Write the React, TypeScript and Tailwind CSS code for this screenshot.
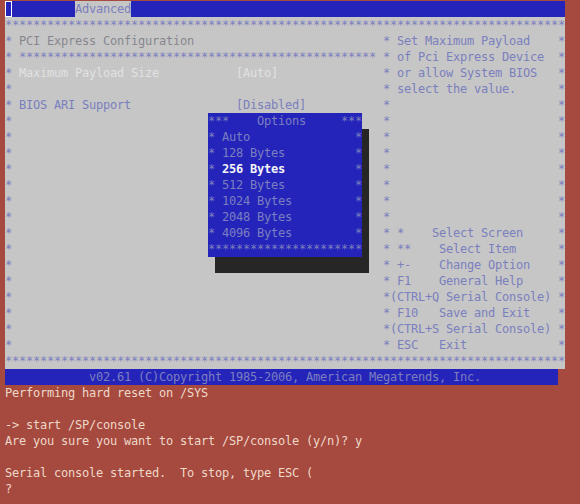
type Seg = [string, string]

const GRAY = "bg-[#c6c6c6] text-[#7b7fbe]"
const GTXT = "bg-[#c6c6c6] text-[#86868f]"
const GHI = "bg-[#c6c6c6] text-[#e2e2e2]"
const BLUE = "bg-[#2424bb] text-[#7b7fbe]"
const BSEL = "bg-[#2424bb] text-[#f4f4f4] font-bold"
const SHAD = "bg-[#262626]"
const CON = "text-[#eed8c8]"

const sp = (n: number) => " ".repeat(n)

const rightText = [
  " Set Maximum Payload",
  " of Pci Express Device",
  " or allow System BIOS",
  " select the value.",
  "", "", "", "", "", "", "", "",
  " *    Select Screen",
  " **    Select Item",
  " +-    Change Option",
  " F1    General Help",
  "(CTRL+Q Serial Console)",
  " F10   Save and Exit",
  "(CTRL+S Serial Console)",
  " ESC   Exit",
]

const options = ["Auto", "128 Bytes", "256 Bytes", "512 Bytes", "1024 Bytes", "2048 Bytes", "4096 Bytes"]

// left half of the setup screen, columns 0-53, rows 2-21
function leftRow(r: number): Seg[] {
  if (r === 2) return [["* ", GRAY], ["PCI Express Configuration", GTXT], [sp(27), GRAY]]
  if (r === 3) return [["* " + "*".repeat(51) + " ", GRAY]]
  if (r === 4)
    return [["* ", GRAY], ["Maximum Payload Size", GHI], [sp(11), GRAY], ["[Auto]", GHI], [sp(15), GRAY]]
  if (r === 6) return [["* BIOS ARI Support" + sp(15) + "[Disabled]" + sp(11), GRAY]]
  if (r === 7) return [["*" + sp(28), GRAY], ["***    Options     ***", BLUE], [sp(3), GRAY]]
  if (r >= 8 && r <= 14) {
    const item = options[r - 8]
    const pop: Seg[] =
      item === "256 Bytes"
        ? [["* ", BLUE], [item, BSEL], [sp(19 - item.length) + "*", BLUE]]
        : [["* " + item.padEnd(19) + "*", BLUE]]
    return [["*" + sp(28), GRAY], ...pop, [" ", SHAD], [sp(2), GRAY]]
  }
  if (r === 15) return [["*" + sp(28), GRAY], ["*".repeat(22), BLUE], [" ", SHAD], [sp(2), GRAY]]
  if (r === 16) return [["*" + sp(29), GRAY], [sp(22), SHAD], [sp(2), GRAY]]
  return [["*" + sp(53), GRAY]]
}

function buildRows(): Seg[][] {
  const rows: Seg[][] = []
  rows.push([
    ["", "cursor"],
    [sp(9), BLUE],
    ["Advanced", GRAY],
    [sp(62), BLUE],
  ])
  rows.push([["*".repeat(80), GRAY]])
  for (let r = 2; r <= 21; r++) {
    rows.push([...leftRow(r), ["*" + rightText[r - 2].padEnd(24) + "*", GRAY]])
  }
  rows.push([["*".repeat(80), GRAY]])
  rows.push([[sp(12) + "v02.61 (C)Copyright 1985-2006, American Megatrends, Inc.".padEnd(67), BLUE]])
  const con = [
    "Performing hard reset on /SYS",
    "",
    "-> start /SP/console",
    "Are you sure you want to start /SP/console (y/n)? y",
    "",
    "Serial console started.  To stop, type ESC (",
    "?",
  ]
  con.forEach((l) => rows.push([[l, CON]]))
  return rows
}

export default function App() {
  const rows = buildRows()

  return (
    <div
      className="w-[580px] h-[504px] overflow-hidden bg-[#a6493f] pt-px pl-[5px] text-[12px] tracking-[-0.2246px]"
      style={{ fontFamily: '"DejaVu Sans Mono", "Liberation Mono", monospace' }}
    >
      {rows.map((row, i) => (
        <div key={i} className="flex h-4">
          {row.map(([t, c], j) =>
            c === "cursor" ? (
              <span key={j} className="w-[7px] h-4 bg-[#2424bb] shadow-[inset_0_0_0_1px_#ffffff]" />
            ) : (
              <span key={j} className={`whitespace-pre leading-4 ${c}`}>
                {t}
              </span>
            )
          )}
        </div>
      ))}
    </div>
  )
}
